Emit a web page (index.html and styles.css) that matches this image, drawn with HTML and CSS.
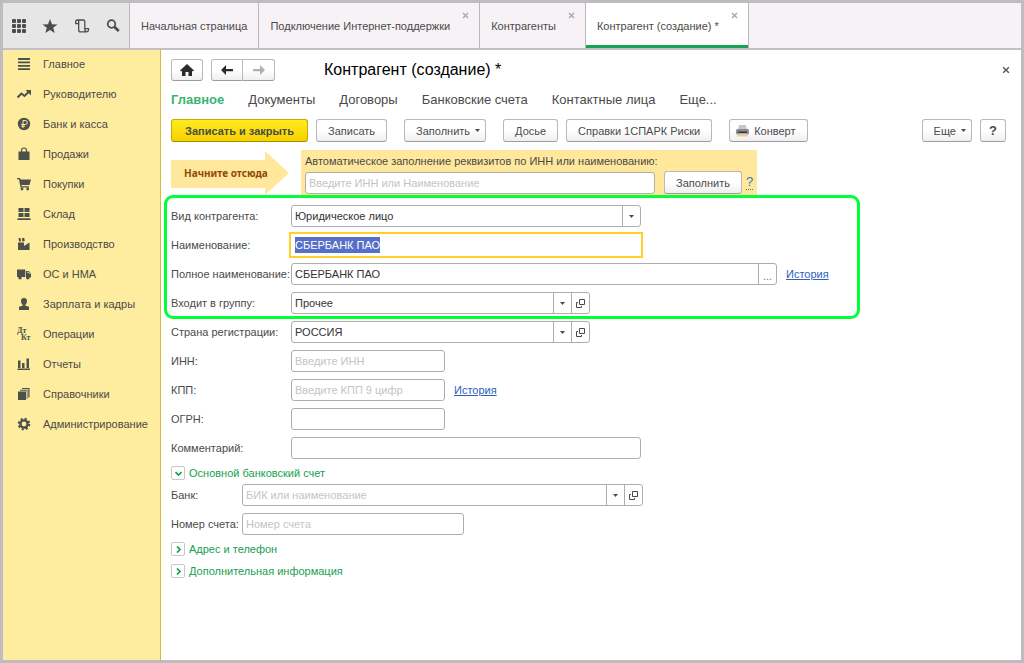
FILE: index.html
```html
<!DOCTYPE html>
<html lang="ru">
<head>
<meta charset="utf-8">
<title>Контрагент (создание)</title>
<link rel="stylesheet" href="styles.css">
</head>
<body>
<svg class="defs" aria-hidden="true">
  <symbol id="caret" viewBox="0 0 5 3"><path d="M0 0h5L2.500 3z"/></symbol>
  <symbol id="open" viewBox="0 0 9 9"><path fill="none" stroke="currentColor" d="M3.500 .500h5v5h-5zM2 3.500H.500v5h5V7"/></symbol>
  <symbol id="cross" viewBox="0 0 7 7"><path fill="none" stroke="currentColor" stroke-width="1.200" d="M1 1l5 5M6 1L1 6"/></symbol>
  <symbol id="chevron" viewBox="0 0 7 7"><path fill="none" stroke="currentColor" stroke-width="1.700" d="M2 .500l3 3-3 3"/></symbol>
</svg>
<div class="window">
  <header class="topbar">
    <div class="tools">
      <button class="tool" aria-label="Меню"><svg width="16" height="16" viewBox="0 0 16 16"><g><rect x="1" y="1" width="4" height="4" rx="1"/><rect x="6" y="1" width="4" height="4" rx="1"/><rect x="11" y="1" width="4" height="4" rx="1"/><rect x="1" y="6" width="4" height="4" rx="1"/><rect x="6" y="6" width="4" height="4" rx="1"/><rect x="11" y="6" width="4" height="4" rx="1"/><rect x="1" y="11" width="4" height="4" rx="1"/><rect x="6" y="11" width="4" height="4" rx="1"/><rect x="11" y="11" width="4" height="4" rx="1"/></g></svg></button>
      <button class="tool" aria-label="Избранное"><svg width="16" height="16" viewBox="0 0 16 16"><path d="M8 1l2 5.200 5.500.200-4.300 3.400 1.500 5.200L8 12l-4.700 3 1.500-5.200L.500 6.400 6 6.200z"/></svg></button>
      <button class="tool" aria-label="История"><svg class="line" width="16" height="16" viewBox="0 0 16 16"><path stroke-width="1.300" d="M4.700 5.600H1.700V3.700Q1.700 2 3.400 2H9.300q1.500 0 1.500 1.500V10.700h3.700v1.300q0 1.800-1.800 1.800H6.600q-1.900 0-1.900-1.900V3.700Q4.700 2 3.400 2M12.700 13.800q-1.900 0-1.900-3.100"/></svg></button>
      <button class="tool" aria-label="Поиск"><svg class="line" width="16" height="16" viewBox="0 0 16 16"><circle cx="6.500" cy="6" r="3.800" stroke-width="1.700"/><path stroke-width="2.800" d="M9.200 8.800l4.600 4.200"/></svg></button>
    </div>
    <nav class="tabs">
      <a class="tab" href="#">Начальная страница</a>
      <a class="tab closable" href="#">Подключение Интернет-поддержки<svg class="tab-close"><use href="#cross"/></svg></a>
      <a class="tab closable" href="#">Контрагенты<svg class="tab-close"><use href="#cross"/></svg></a>
      <a class="tab closable active" href="#">Контрагент (создание) *<svg class="tab-close"><use href="#cross"/></svg></a>
    </nav>
  </header>
  <div class="content">
    <nav class="sidebar">
      <a href="#"><svg viewBox="0 0 14 14"><path d="M1 1h12v2H1zM1 4.500h12v1.700H1zM1 8h12v1.700H1zM1 11.300h12V13H1z"/></svg>Главное</a>
      <a href="#"><svg viewBox="0 0 14 14"><path fill="none" stroke="currentColor" stroke-width="2" d="M.500 10.500L4.500 6.500 7.500 9 12 4.500"/><path d="M8.500 3H14v5.500z"/></svg>Руководителю</a>
      <a href="#"><svg viewBox="0 0 14 14"><circle cx="7" cy="7" r="6.200"/><path class="cut" d="M6 11V3.500h2.300a2 2 0 0 1 0 4H4.200M4.200 9.200h4"/></svg>Банк и касса</a>
      <a href="#"><svg viewBox="0 0 14 14"><path d="M1.500 4.500h11V13h-11z"/><path fill="none" stroke="currentColor" stroke-width="1.200" d="M4.500 6V3.500a2.500 2.500 0 0 1 5 0V6"/></svg>Продажи</a>
      <a href="#"><svg viewBox="0 0 14 14"><path d="M0 1h3l.600 1.500H14L12.500 8H4.500l.300 1.200H12v1.300H3.500L2 2.300H0z"/><circle cx="5" cy="12" r="1.400"/><circle cx="10.700" cy="12" r="1.400"/></svg>Покупки</a>
      <a href="#"><svg viewBox="0 0 14 14"><path d="M1.500 1h5v4h-5zM7.500 1h5v4h-5zM1.500 6h5v4h-5zM7.500 6h5v4h-5zM.500 11.300h13V13H.500z"/></svg>Склад</a>
      <a href="#"><svg viewBox="0 0 14 14"><path d="M1 13V5.500h6V9l5.500-3.500V13zM1.500 1h2L4 4.500H2zM4.800 1.500l2.400-.800.600 3.300-2.500.500z"/></svg>Производство</a>
      <a href="#"><svg viewBox="0 0 14 14"><path d="M0 2.500h8.300v7.500H0zM9 4h3l2 3v3.500H9z"/><circle cx="3" cy="10.800" r="1.700"/><circle cx="10.800" cy="10.800" r="1.700"/><path class="cut" d="M10.200 5.300h1.600l.800 1.500"/></svg>ОС и НМА</a>
      <a href="#"><svg viewBox="0 0 14 14"><path d="M7 1q3 0 3 3T8.400 7.700v1L12 9.700V13H2V9.700l3.600-1v-1Q4 7 4 4t3-3z"/></svg>Зарплата и кадры</a>
      <a href="#"><svg viewBox="0 0 14 14"><text class="posting" x="0" y="6">Дт</text><text class="posting" x="4" y="13">Кт</text></svg>Операции</a>
      <a href="#"><svg viewBox="0 0 14 14"><path d="M1 3.500h2.500V11H1zM5 6h2.500v5H5zM9.500 1.500H12V11H9.500zM.500 11.500h12.500V13H.500z"/></svg>Отчеты</a>
      <a href="#"><svg viewBox="0 0 14 14"><path d="M1 4.500h8V13H1zM3 2.800h7.500V12h-.800V3.700H3zM5 1h7.500v9.500h-1.200V2H5z"/></svg>Справочники</a>
      <a href="#"><svg viewBox="0 0 14 14"><circle cx="7" cy="7" r="3.600" fill="none" stroke="currentColor" stroke-width="2.400"/><circle cx="7" cy="7" r="5.300" fill="none" stroke="currentColor" stroke-width="2" stroke-dasharray="2.160 2"/></svg>Администрирование</a>
    </nav>
    <main class="main">
      <div class="title-row">
        <button class="btn icon-btn" aria-label="Домой"><svg width="14" height="12" viewBox="0 0 14 12"><path d="M7 0l7 6.500-1 1-1-.800V12H8.500V8h-3v4H2V6.700l-1 .800-1-1z"/></svg></button>
        <div class="history">
          <button class="btn icon-btn" aria-label="Назад"><svg width="12" height="10" viewBox="0 0 12 10"><path d="M5 0L0 5l5 5V6.200h7V4H5z"/></svg></button>
          <button class="btn icon-btn dim" aria-label="Вперед"><svg width="12" height="10" viewBox="0 0 12 10"><path d="M7 0l5 5-5 5V6.200H0V4h7z"/></svg></button>
        </div>
        <h1>Контрагент (создание) *</h1>
        <button class="close" aria-label="Закрыть"><svg width="8" height="8"><use href="#cross"/></svg></button>
      </div>
      <nav class="sections">
        <a class="current" href="#">Главное</a>
        <a href="#">Документы</a>
        <a href="#">Договоры</a>
        <a href="#">Банковские счета</a>
        <a href="#">Контактные лица</a>
        <a href="#">Еще...</a>
      </nav>
      <div class="toolbar">
        <div class="btn-group">
          <button class="btn primary">Записать и закрыть</button>
          <button class="btn">Записать</button>
        </div>
        <button class="btn menu">Заполнить<svg class="caret"><use href="#caret"/></svg></button>
        <div class="btn-group">
          <button class="btn">Досье</button>
          <button class="btn">Справки 1СПАРК Риски</button>
        </div>
        <button class="btn with-icon"><svg width="13" height="12" viewBox="0 0 13 12"><path fill="#c9c4c6" d="M3 0h7l1 5H2z"/><rect y="4" width="13" height="5.500" rx="1.500" fill="#8b8b8f"/><path fill="#33343a" d="M2 6.500h9V8H2z"/><path fill="#e9c9a0" d="M2 8.500h9l1 3H1z"/></svg>Конверт</button>
        <div class="btn-group end">
          <button class="btn menu">Еще<svg class="caret"><use href="#caret"/></svg></button>
          <button class="btn help">?</button>
        </div>
      </div>
      <div class="autofill">
        <div class="arrow"><svg viewBox="0 0 118 45" preserveAspectRatio="none" aria-hidden="true"><path d="M0 10h94V1l24 22-24 22V38H0z"/></svg><span>Начните отсюда</span></div>
        <div class="autofill-box">
          <label for="auto">Автоматическое заполнение реквизитов по ИНН или наименованию:</label>
          <div class="autofill-row">
            <div class="field medium"><input id="auto" placeholder="Введите ИНН или Наименование"></div>
            <button class="btn">Заполнить</button>
            <a class="hint" href="#">?</a>
          </div>
        </div>
      </div>
      <form class="form">
        <div class="rows marked">
          <div class="row"><label for="kind">Вид контрагента:</label>
            <div class="field medium"><select id="kind"><option>Юридическое лицо</option></select><span class="cell"><svg class="caret"><use href="#caret"/></svg></span></div></div>
          <div class="row"><label for="name">Наименование:</label>
            <div class="field medium focused"><input id="name" value="СБЕРБАНК ПАО"></div></div>
          <div class="row"><label for="full">Полное наименование:</label>
            <div class="field long"><input id="full" value="СБЕРБАНК ПАО"><button type="button" class="cell dots">...</button></div><a class="link" href="#">История</a></div>
          <div class="row"><label for="group">Входит в группу:</label>
            <div class="field combo"><select id="group"><option>Прочее</option></select><span class="cell"><svg class="caret"><use href="#caret"/></svg></span><button type="button" class="cell" aria-label="Открыть"><svg class="open"><use href="#open"/></svg></button></div></div>
        </div>
        <div class="rows">
          <div class="row"><label for="country">Страна регистрации:</label>
            <div class="field combo"><select id="country"><option>РОССИЯ</option></select><span class="cell"><svg class="caret"><use href="#caret"/></svg></span><button type="button" class="cell" aria-label="Открыть"><svg class="open"><use href="#open"/></svg></button></div></div>
          <div class="row"><label for="inn">ИНН:</label><div class="field short"><input id="inn" placeholder="Введите ИНН"></div></div>
          <div class="row"><label for="kpp">КПП:</label><div class="field short"><input id="kpp" placeholder="Введите КПП 9 цифр"></div><a class="link" href="#">История</a></div>
          <div class="row"><label for="ogrn">ОГРН:</label><div class="field short"><input id="ogrn"></div></div>
          <div class="row"><label for="note">Комментарий:</label><div class="field medium"><input id="note"></div></div>
        </div>
        <button type="button" class="fold opened"><span class="box"><svg><use href="#chevron"/></svg></span>Основной банковский счет</button>
        <div class="rows bank">
          <div class="row"><label for="bank">Банк:</label>
            <div class="field bank-name"><input id="bank" placeholder="БИК или наименование"><button type="button" class="cell" aria-label="Выбрать"><svg class="caret"><use href="#caret"/></svg></button><button type="button" class="cell" aria-label="Открыть"><svg class="open"><use href="#open"/></svg></button></div></div>
          <div class="row"><label for="account">Номер счета:</label><div class="field account"><input id="account" placeholder="Номер счета"></div></div>
        </div>
        <div class="folds">
          <button type="button" class="fold"><span class="box"><svg><use href="#chevron"/></svg></span>Адрес и телефон</button>
          <button type="button" class="fold"><span class="box"><svg><use href="#chevron"/></svg></span>Дополнительная информация</button>
        </div>
      </form>
    </main>
  </div>
</div>
<script src="script.js"></script>
</body>
</html>
```
FILE: styles.css
```css
* { box-sizing: border-box; }

body {
  margin: 0;
  font: 11px/16px "Liberation Sans", Arial, sans-serif;
  color: #4a4a4a;
}

a { color: inherit; text-decoration: none; }
button, input, select { font: inherit; color: inherit; margin: 0; }
button { padding: 0; border: 0; background: none; }
svg { fill: currentColor; flex: none; }
.line { fill: none; stroke: currentColor; }
.defs { display: none; }

.window {
  min-height: 100vh;
  display: flex;
  flex-direction: column;
  border: 3px solid #bdbdc1;
  background: #fff;
}

/* Top bar */
.topbar {
  display: flex;
  height: 47px;
  background: #f6f2f6;
  border-bottom: 2px solid #c3c0c3;
}
.tools {
  display: flex;
  align-items: center;
  width: 127px;
  background: #e6e6e6;
  border-right: 1px solid #b9b9b9;
}
.tool { flex: 1; height: 32px; color: #4a4f4c; }
.tool svg { display: block; margin: auto; }
.tabs { display: flex; }
.tab {
  position: relative;
  display: flex;
  align-items: center;
  padding: 0 11px;
  border-right: 1px solid #b9b7b9;
}
.closable { padding-right: 29px; }
.active { background: #fff; box-shadow: inset 0 -3px #17a354; }
.tab-close {
  position: absolute;
  top: 9px;
  right: 10px;
  width: 7px;
  height: 7px;
  color: #a5a5a5;
}

.content { flex: 1; display: flex; }

/* Sidebar */
.sidebar {
  width: 158px;
  background: #ffed9f;
  border-right: 1px solid #d2bb3e;
}
.sidebar a {
  display: flex;
  align-items: center;
  gap: 12px;
  height: 30px;
  padding: 0 0 2px 14px;
  white-space: nowrap;
}
.sidebar svg { width: 14px; height: 14px; color: #4d504b; }
.cut { fill: none; stroke: #ffed9f; stroke-width: 1; }
.posting { font: bold 8px "Liberation Serif", serif; }

/* Main area */
.main { flex: 1; min-width: 0; padding: 9px 15px 20px 10px; }

.btn {
  display: inline-flex;
  align-items: center;
  justify-content: center;
  height: 23px;
  padding: 0 11px;
  white-space: nowrap;
  background: linear-gradient(#fff 50%, #f0eef0);
  border: 1px solid #b9b9b9;
  border-bottom-color: #9d9d9d;
  border-radius: 3px;
}
.caret { width: 5px; height: 3px; }
.menu { gap: 5px; padding-right: 5px; }
.with-icon { gap: 5px; padding-left: 6px; }
.primary {
  padding: 0 13px;
  font-weight: bold;
  background: linear-gradient(#ffec1e, #f6d200);
  border-color: #c9a800;
  border-bottom-color: #a98b00;
}
.help { width: 26px; padding: 0; font-size: 13px; font-weight: bold; }
.icon-btn { width: 32px; height: 22px; padding: 0; color: #2b2b2b; }

.title-row { display: flex; align-items: center; gap: 8px; }
.history { display: flex; }
.history .btn:first-child { border-radius: 3px 0 0 3px; }
.history .btn:last-child { border-radius: 0 3px 3px 0; border-left: 0; }
.history .dim { color: #b0b0b0; }
h1 {
  flex: 1;
  margin: 0 0 0 41px;
  font-size: 16px;
  line-height: 22px;
  font-weight: normal;
  color: #000;
}
.close { margin-right: -8px; padding: 4px; color: #555; }
.close svg { display: block; }

.sections {
  display: flex;
  gap: 24px;
  margin-top: 10px;
  font-size: 13px;
  line-height: 18px;
}
.sections .current { font-weight: bold; color: #3cb371; }

.toolbar { display: flex; gap: 17px; margin-top: 10px; }
.btn-group { display: flex; gap: 8px; }
.end { margin-left: auto; }

/* Autofill panel */
.autofill { display: flex; gap: 12px; margin-top: 8px; }
.arrow {
  position: relative;
  display: flex;
  align-items: center;
  width: 118px;
  height: 45px;
  padding-left: 13px;
  font: bold 10px/16px "Noto Sans", sans-serif;
  color: #8f4a08;
}
.arrow svg { position: absolute; inset: 0; width: 100%; height: 100%; fill: #ffe89c; }
.arrow span { position: relative; white-space: nowrap; }
.autofill-box {
  width: 456px;
  padding: 3px 4px 2px;
  background: #ffe89c;
}
.autofill-box label { display: block; height: 18px; }
.autofill-row { display: flex; align-items: center; gap: 9px; }
.hint { margin-left: -5px; font-size: 13px; line-height: 14px; color: #2c7fb8; border-bottom: 1px dotted; }

/* Form */
.form { margin-top: 9px; }
.rows { display: grid; gap: 7px; }
.rows + .rows { margin-top: 7px; }
.row { display: flex; align-items: center; }
.row label { width: 120px; white-space: nowrap; }
.marked { position: relative; max-width: 682px; }
.marked::after {
  content: "";
  position: absolute;
  inset: -10px -7px -5px;
  border: 3px solid #00ff37;
  border-radius: 9px;
  pointer-events: none;
}

.field {
  display: flex;
  flex: none;
  height: 22px;
  overflow: hidden;
  background: #fff;
  border: 1px solid #adadad;
  border-radius: 3px;
}
.field input, .field select {
  flex: 1;
  min-width: 0;
  padding: 0 3px;
  border: 0;
  outline: 0;
  background: none;
  appearance: none;
  color: #333;
}
.field input::placeholder { color: #c4c4c4; }
.field input::selection { background: #5670c8; color: #fff; }
.cell {
  display: flex;
  align-items: center;
  justify-content: center;
  width: 18px;
  border-left: 1px solid #adadad;
}
.open { width: 9px; height: 9px; }
.dots { align-items: flex-end; color: #777; }
.medium { width: 350px; }
.long { width: 486px; }
.combo { width: 299px; }
.short { width: 154px; }
.bank-name { width: 401px; }
.account { width: 222px; }
.focused { border-color: #fff; border-radius: 0; outline: 2px solid #ffd02c; }
.link { margin-left: 9px; color: #2a62b8; text-decoration: underline; }

.fold { display: flex; align-items: center; gap: 4px; color: #16a050; }
.opened { margin: 6px 0 3px; }
.box {
  display: flex;
  align-items: center;
  justify-content: center;
  width: 14px;
  height: 14px;
  border: 1px solid #c8c8c8;
  border-radius: 2px;
}
.box svg { width: 7px; height: 7px; }
.opened svg { transform: rotate(90deg); }
.bank label { width: 71px; }
.folds { display: grid; gap: 6px; margin-top: 6px; }
```
FILE: script.js
```js
const nameInput = document.getElementById('name');
nameInput.focus();
nameInput.select();
```
